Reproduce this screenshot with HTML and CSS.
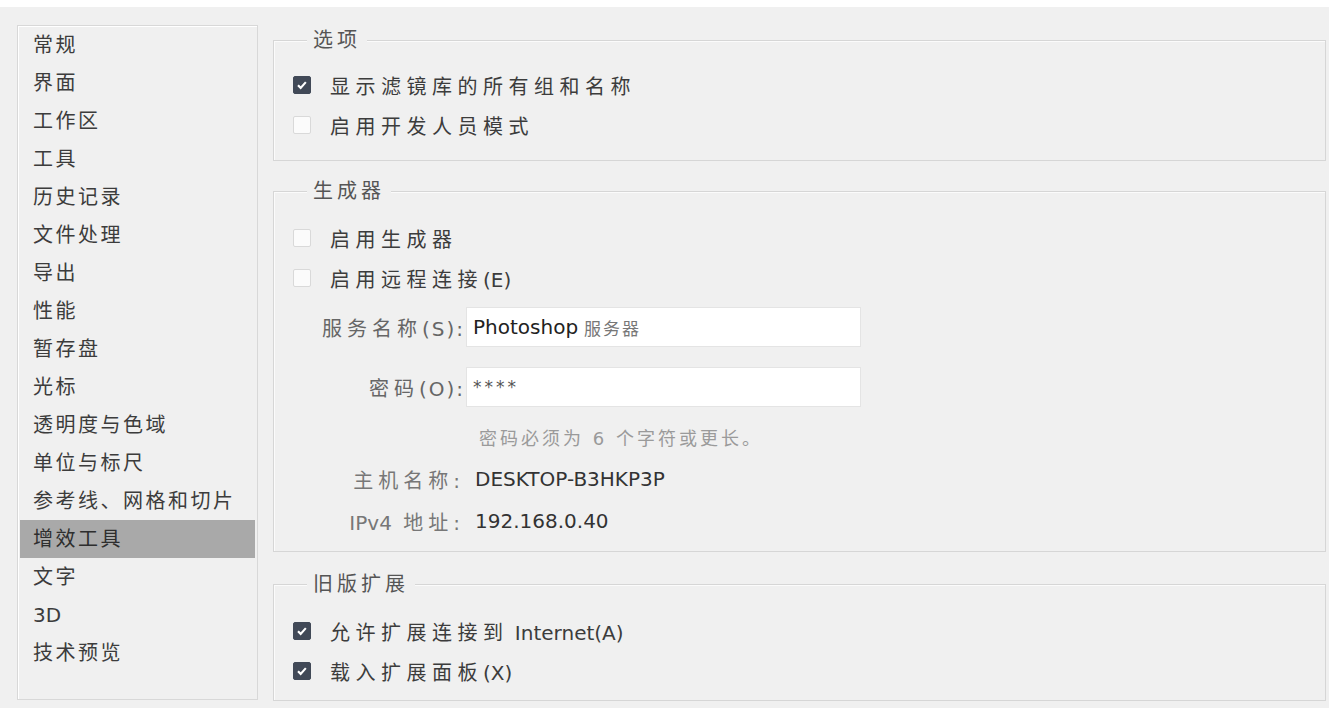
FILE: index.html
```html
<!DOCTYPE html>
<html lang="zh-CN">
<head>
    <meta charset="UTF-8">
    <title>首选项 - 增效工具</title>
    <link rel="stylesheet" href="styles.css">
</head>
<body>
    <div class="dialog">
        <ul class="nav">
            <li>常规</li>
            <li>界面</li>
            <li>工作区</li>
            <li>工具</li>
            <li>历史记录</li>
            <li>文件处理</li>
            <li>导出</li>
            <li>性能</li>
            <li>暂存盘</li>
            <li>光标</li>
            <li>透明度与色域</li>
            <li>单位与标尺</li>
            <li>参考线、网格和切片</li>
            <li class="active">增效工具</li>
            <li>文字</li>
            <li><span class="en">3D</span></li>
            <li>技术预览</li>
        </ul>

        <div class="panel">
            <fieldset class="group first">
                <legend>选项</legend>
                <label class="check"><span class="box on"></span><span>显示滤镜库的所有组和名称</span></label>
                <label class="check"><span class="box"></span><span>启用开发人员模式</span></label>
            </fieldset>

            <fieldset class="group">
                <legend>生成器</legend>
                <label class="check"><span class="box"></span><span>启用生成器</span></label>
                <label class="check"><span class="box"></span><span>启用远程连接<span class="en">(E)</span></span></label>
                <div class="form">
                    <div class="field input-row">
                        <span class="label">服务名称<span class="key">(S):</span></span>
                        <div class="input"><span class="en">Photoshop</span> <span class="faint">服务器</span></div>
                    </div>
                    <div class="field input-row">
                        <span class="label">密码<span class="key">(O):</span></span>
                        <div class="input"><span class="en stars">****</span></div>
                    </div>
                    <div class="field">
                        <span class="label"></span>
                        <span class="value hint">密码必须为 6 个字符或更长。</span>
                    </div>
                    <div class="field">
                        <span class="label light">主机名称:</span>
                        <span class="value text en">DESKTOP-B3HKP3P</span>
                    </div>
                    <div class="field">
                        <span class="label light"><span class="en">IPv4</span> 地址:</span>
                        <span class="value text en">192.168.0.40</span>
                    </div>
                </div>
            </fieldset>

            <fieldset class="group last">
                <legend>旧版扩展</legend>
                <label class="check"><span class="box on"></span><span>允许扩展连接到<span class="en"> Internet(A)</span></span></label>
                <label class="check"><span class="box on"></span><span>载入扩展面板<span class="en">(X)</span></span></label>
            </fieldset>
        </div>
    </div>
</body>
</html>
```

FILE: styles.css
```css
* { margin: 0; padding: 0; box-sizing: border-box; }

body {
    background: #fff;
    color: #3c3c3c;
    font-family: "DejaVu Sans", "Noto Sans CJK SC", sans-serif;
    font-size: 20px;
}

.dialog {
    margin-top: 7px;
    height: 701px;
    background: #f0f0f0;
    display: flex;
    gap: 15px;
    padding: 18px 3px 0 17px;
}

/* category list */
.nav {
    list-style: none;
    flex: none;
    width: 241px;
    height: 675px;
    border: 1px solid #d8d8d8;
    box-shadow: inset 1px 1px 0 #fff;
    padding: 0 2px;
}

.nav li {
    height: 38px;
    line-height: 38px;
    padding-left: 13px;
    letter-spacing: 2.5px;
    white-space: nowrap;
}

.nav li.active {
    background: #a9a9a9;
    color: #2e2e2e;
}

/* right side */
.panel {
    flex: 1;
    display: flex;
    flex-direction: column;
}

.group {
    border: 1px solid #d6d6d6;
    box-shadow: inset 1px 1px 0 #fbfbfb;
    padding: 15px 19px 9px;
    margin-top: 18px;
}

.group.first {
    margin-top: 3px;
    padding-top: 13px;
    padding-bottom: 15px;
}

.group.last {
    margin-top: 20px;
}

.group legend {
    margin-left: 14px;
    padding: 0 6px;
    line-height: 24px;
    letter-spacing: 4px;
    color: #555;
    background: #f0f0f0;
}

.check {
    display: flex;
    align-items: center;
    gap: 19px;
    height: 40px;
    letter-spacing: 5.5px;
    white-space: nowrap;
}

.box {
    flex: none;
    width: 18px;
    height: 18px;
    border: 1px solid #d9d9d9;
    background: #fbfbfb;
    border-radius: 2px;
}

.box.on {
    border-color: #414957;
    background: #414957 url("data:image/svg+xml,%3Csvg xmlns='http://www.w3.org/2000/svg' viewBox='0 0 18 18'%3E%3Cpath d='M4.5 9.2l3 3 5.8-6.4' fill='none' stroke='%23fff' stroke-width='2.4'/%3E%3C/svg%3E") center / 100% no-repeat;
}

.en {
    letter-spacing: 0;
}

/* generator form */
.form {
    margin-top: 9px;
}

.field {
    display: flex;
    align-items: center;
    height: 42px;
    white-space: nowrap;
}

.field.input-row {
    height: 40px;
    margin-bottom: 20px;
}

.field.input-row + .field:not(.input-row) {
    margin-top: -11px;
}

.label {
    flex: none;
    width: 172px;
    text-align: right;
    color: #666;
    letter-spacing: 5px;
}

.label .key {
    letter-spacing: 2px;
}

.label.light {
    color: #777;
}

.input {
    margin-left: 1px;
    width: 395px;
    height: 40px;
    background: #fff;
    border: 1px solid #e4e4e4;
    padding-left: 6px;
    display: flex;
    align-items: center;
    gap: 6px;
    color: #222;
}

.faint {
    color: #777;
    font-size: 17px;
    letter-spacing: 2px;
}

.stars {
    font-size: 17px;
    letter-spacing: 3px;
    color: #555;
}

.value {
    margin-left: 1px;
}

.text {
    padding-left: 9px;
    color: #333;
}

.hint {
    padding-left: 13px;
    font-size: 18px;
    color: #9a9a9a;
    letter-spacing: 3px;
}
```
